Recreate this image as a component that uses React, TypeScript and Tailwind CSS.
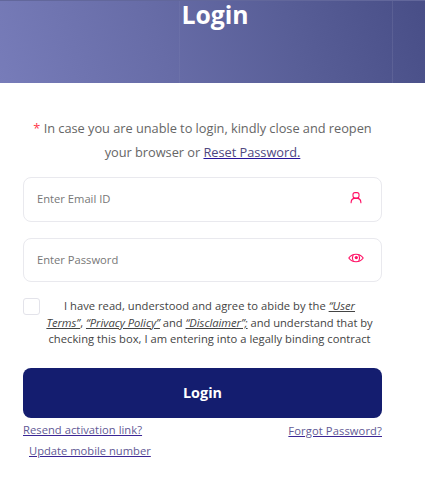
import React from "react";

function UserIcon() {
  return (
    <svg width="12" height="12" viewBox="0 0 12 12" fill="none" stroke="#ff0f64" strokeWidth="1.1" strokeLinecap="round">
      <rect x="3" y="0.6" width="6" height="5.5" rx="2" />
      <path d="M1.1 10.8C1.1 8.2 2.8 6.7 4.2 6.400h3.600c1.400.3 3.100 1.800 3.100 4.400" />
    </svg>
  );
}

function EyeIcon() {
  return (
    <svg width="16" height="10" viewBox="0 0 16 10" fill="none" stroke="#ff0f64" strokeWidth="1.1">
      <path d="M.8 5C2.600 2.400 5 1.200 8 1.200s5.400 1.200 7.200 3.800C13.400 7.600 11 8.800 8 8.800S2.600 7.600.8 5Z" />
      <path d="M5.200 1.800C4.200 3.800 4.200 6.200 5.200 8.200M10.800 1.800c1 2 1 4.400 0 6.400" />
      <circle cx="8.300" cy="4.600" r="1.600" fill="#ff0f64" stroke="none" />
    </svg>
  );
}

function Field({ type, placeholder, className, children }: { type: string; placeholder: string; className: string; children: React.ReactNode }) {
  return (
    <div className={`flex w-[359px] items-center rounded-lg border border-[#e9e9ee] bg-white pl-[13px] ${className}`}>
      <input
        type={type}
        placeholder={placeholder}
        className="min-w-0 flex-1 bg-transparent text-[11.2px] text-[#666] outline-none placeholder:text-[#777]"
      />
      {children}
    </div>
  );
}

export default function App() {
  return (
    <main className="h-[489px] w-[425px] overflow-hidden bg-white font-['Open_Sans',sans-serif]">
      <header className="flex h-[83px] justify-center border-t border-[#62679b] bg-[linear-gradient(90deg,transparent_179px,#ffffff0a_179px,#ffffff0a_180px,transparent_180px,transparent_392px,#ffffff14_392px,#ffffff14_393px,transparent_393px),linear-gradient(70deg,#777cb9_0%,#676ca7_38%,#585e97_68%,#484e87_100%)] pr-px">
        <h1 className="pl-[6px] text-[24.8px] leading-[26px] font-bold text-white">Login</h1>
      </header>
      <section className="ml-[23px] flex w-[359px] flex-col">
        <p className="mt-[33px] text-center text-[12.8px] leading-6 tracking-[-0.03px] text-[#666]">
          <span className="text-[#ff3b4e]">*</span> In case you are unable to login, kindly close and reopen
          <br />
          your browser or <a href="#" className="text-[#50487f] underline decoration-[#27139b]">Reset Password.</a>
        </p>
        <Field type="email" placeholder="Enter Email ID" className="mt-[13px] h-[45px]">
          <span className="mr-[19px] mb-1"><UserIcon /></span>
        </Field>
        <Field type="password" placeholder="Enter Password" className="mt-4 h-11">
          <span className="mr-[17px] mb-1"><EyeIcon /></span>
        </Field>
        <div className="mt-4 flex">
          <input type="checkbox" className="h-[17px] w-[17px] shrink-0 appearance-none rounded-[3px] border border-[#e3e3ea]" />
          <p className="ml-[5px] w-[329px] text-center text-[11.2px] leading-[16.5px] whitespace-nowrap text-[#444]">
            <span className="tracking-[0.02px]">I have read, understood and agree to abide by the <a href="#" className="italic underline">“User</a></span>
            <br />
            <span className="tracking-[-0.03px]">
              <a href="#" className="italic underline">Terms”</a>, <a href="#" className="italic underline">“Privacy Policy”</a> and <a href="#" className="italic underline">“Disclaimer”;</a> and understand that by
            </span>
            <br />
            <span className="tracking-[0.02px]">checking this box, I am entering into a legally binding contract</span>
          </p>
        </div>
        <button className="mt-5 h-[50px] w-full rounded-lg bg-[#141d6f] text-[14.4px] font-bold text-white">Login</button>
        <div className="flex justify-between text-[11.2px] text-[#625995]">
          <div className="flex flex-col items-start pt-px leading-[21px]">
            <a href="#" className="tracking-[0.04px] underline decoration-[#3b2595]">Resend activation link?</a>
            <a href="#" className="ml-[6px] underline decoration-[#3b2595]">Update mobile number</a>
          </div>
          <a href="#" className="pt-[2px] leading-[21px] tracking-[0.1px] underline decoration-[#3b2595]">Forgot Password?</a>
        </div>
      </section>
    </main>
  );
}
